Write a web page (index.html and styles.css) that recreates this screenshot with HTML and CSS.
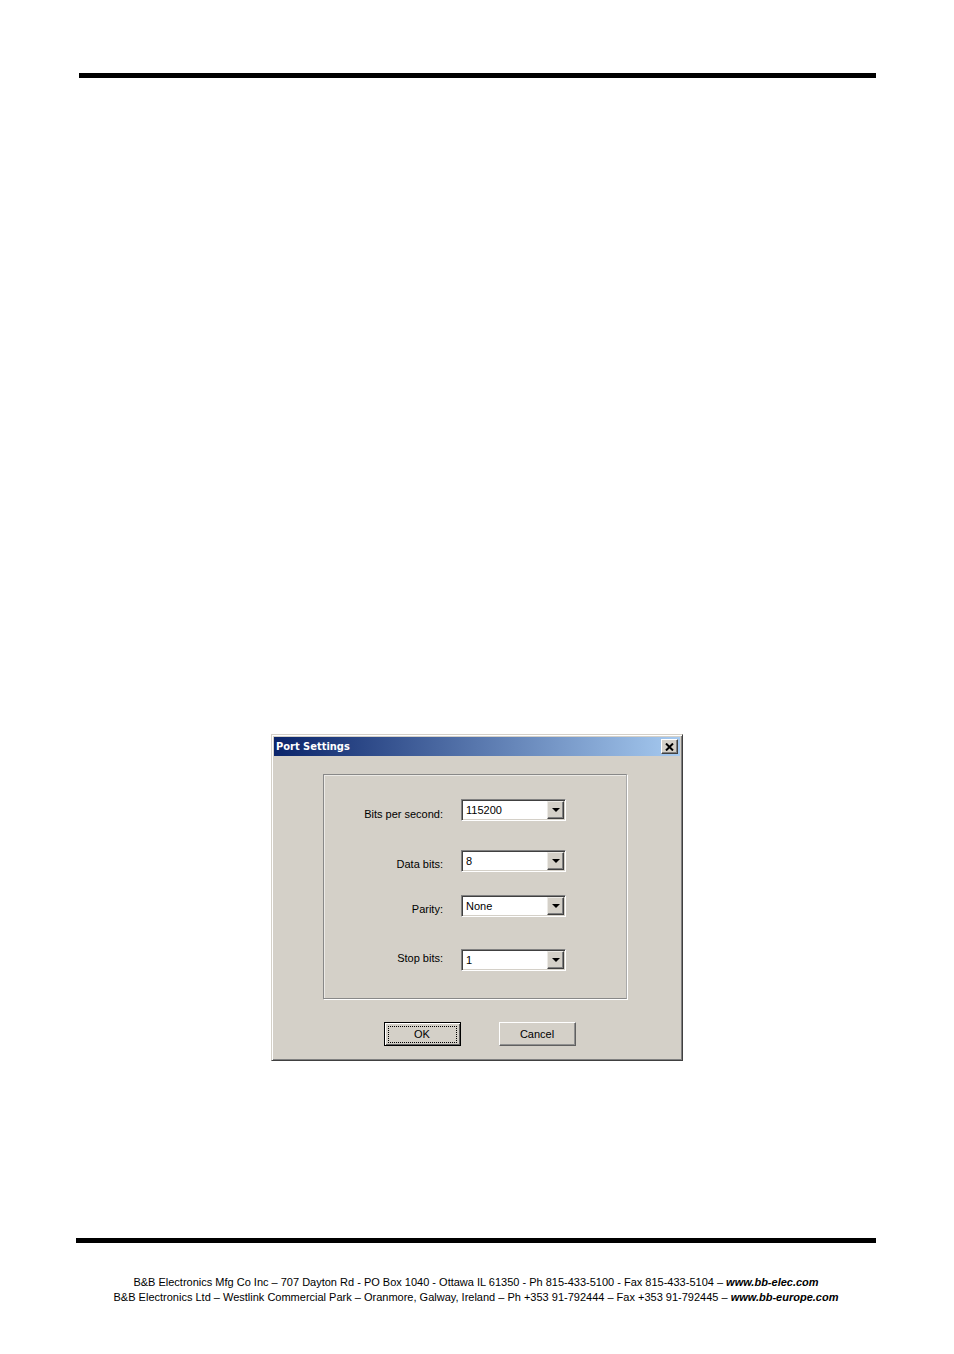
FILE: index.html
```html
<!DOCTYPE html>
<html lang="en">
<head>
    <meta charset="UTF-8">
    <meta name="viewport" content="width=device-width, initial-scale=1.0">
    <title>Port Settings</title>
    <link rel="stylesheet" href="styles.css">
</head>
<body>
    <header class="page-header"></header>

    <main class="page-content">
        <form class="dialog" role="dialog" aria-labelledby="dialog-title">
            <div class="title-bar">
                <h1 class="title" id="dialog-title">Port Settings</h1>
                <button class="close" type="button" aria-label="Close">
                    <svg width="9" height="8" viewBox="0 0 9 8" aria-hidden="true">
                        <path d="M1 0.5L8 7.5M8 0.5L1 7.5" stroke="#000" stroke-width="2"/>
                    </svg>
                </button>
            </div>

            <div class="settings">
                <div class="labels">
                    <label for="bits-per-second">Bits per second:</label>
                    <label for="data-bits">Data bits:</label>
                    <label for="parity">Parity:</label>
                    <label for="stop-bits">Stop bits:</label>
                </div>
                <div class="fields">
                    <div class="combo">
                        <select id="bits-per-second">
                            <option>115200</option>
                        </select>
                        <span class="arrow"><svg width="8" height="4" viewBox="0 0 8 4" aria-hidden="true"><path d="M0 0h8L4 4z"/></svg></span>
                    </div>
                    <div class="combo">
                        <select id="data-bits">
                            <option>8</option>
                        </select>
                        <span class="arrow"><svg width="8" height="4" viewBox="0 0 8 4" aria-hidden="true"><path d="M0 0h8L4 4z"/></svg></span>
                    </div>
                    <div class="combo">
                        <select id="parity">
                            <option>None</option>
                        </select>
                        <span class="arrow"><svg width="8" height="4" viewBox="0 0 8 4" aria-hidden="true"><path d="M0 0h8L4 4z"/></svg></span>
                    </div>
                    <div class="combo">
                        <select id="stop-bits">
                            <option>1</option>
                        </select>
                        <span class="arrow"><svg width="8" height="4" viewBox="0 0 8 4" aria-hidden="true"><path d="M0 0h8L4 4z"/></svg></span>
                    </div>
                </div>
            </div>

            <div class="actions">
                <button class="btn btn-default" type="button"><span>OK</span></button>
                <button class="btn" type="button"><span>Cancel</span></button>
            </div>
        </form>
    </main>

    <footer class="page-footer">
        <p>B&amp;B Electronics Mfg Co Inc – 707 Dayton Rd - PO Box 1040 - Ottawa IL 61350 - Ph 815-433-5100 - Fax 815-433-5104 – <a href="#">www.bb-elec.com</a></p>
        <p>B&amp;B Electronics Ltd – Westlink Commercial Park – Oranmore, Galway, Ireland – Ph +353 91-792444 – Fax +353 91-792445 – <a href="#">www.bb-europe.com</a></p>
    </footer>
</body>
</html>
```
FILE: styles.css
```css
* {
    box-sizing: border-box;
}
body {
    display: flex;
    flex-direction: column;
    min-height: 100vh;
    margin: 0;
    padding: 73px 78px 0 76px;
    background-color: #fff;
    color: #000;
    font-family: "Liberation Sans", Arial, sans-serif;
    font-size: 11px;
}
.page-header {
    margin-left: 3px;
    border-top: 5px solid #000;
}
.page-content {
    display: flex;
    flex: 1;
    justify-content: center;
    align-items: flex-start;
    padding: 656px 0 48px 2px;
}

/* Dialog window */
.dialog {
    width: 412px;
    padding: 1px;
    background-color: #d4d0c8;
    border: 1px solid;
    border-color: #d4d0c8 #404040 #404040 #d4d0c8;
    box-shadow: inset 1px 1px #fff, inset -1px -1px #808080;
}
.title-bar {
    display: flex;
    align-items: center;
    justify-content: space-between;
    height: 19px;
    margin: 1px;
    padding: 0 2px;
    background: linear-gradient(to right, #0a246a, #a6caf0);
}
.title {
    margin: 0;
    color: #fff;
    font: bold 11px/18px "DejaVu Sans Condensed", "DejaVu Sans", sans-serif;
}
.close {
    display: flex;
    align-items: center;
    justify-content: center;
    width: 17px;
    height: 15px;
    padding: 0;
    background-color: #d4d0c8;
    border: 1px solid;
    border-color: #fff #404040 #404040 #fff;
    box-shadow: inset -1px -1px #808080;
}
.settings {
    display: flex;
    justify-content: flex-end;
    gap: 18px;
    height: 225px;
    margin: 18px 54px 0 50px;
    padding: 24px 60px 0 20px;
    border: 1px solid #888;
    border-right-color: #aaa;
    box-shadow: inset 1px 1px #eceae6, 1px 1px #fff;
}
.labels {
    display: grid;
    grid-template-rows: 50px 45px 49px 22px;
    align-content: start;
    padding-top: 4px;
    text-align: right;
    line-height: 22px;
}
.fields {
    display: grid;
    grid-template-rows: 51px 45px 54px 22px;
    align-content: start;
    width: 105px;
}

/* Drop-down with its arrow button laid over the right edge */
.combo {
    display: grid;
    align-self: start;
    height: 22px;
}
.combo select {
    grid-area: 1 / 1;
    appearance: none;
    width: 100%;
    height: 22px;
    padding: 0 20px 0 4px;
    background-color: #fff;
    border: 1px solid;
    border-color: #808080 #fff #fff #808080;
    border-radius: 0;
    box-shadow: inset 1px 1px #404040, inset -1px -1px #d4d0c8;
    color: #000;
    font: inherit;
}
.arrow {
    grid-area: 1 / 1;
    display: flex;
    align-items: center;
    justify-content: center;
    justify-self: end;
    align-self: center;
    width: 17px;
    height: 18px;
    margin-right: 2px;
    background-color: #d4d0c8;
    border: 1px solid;
    border-color: #eceae6 #404040 #404040 #eceae6;
    box-shadow: inset -1px -1px #808080;
    pointer-events: none;
}

.actions {
    display: flex;
    justify-content: center;
    gap: 38px;
    padding: 23px 0 13px 5px;
}
.btn {
    width: 77px;
    height: 24px;
    padding: 2px;
    background-color: #d4d0c8;
    border: 1px solid;
    border-color: #fff #606060 #606060 #fff;
    box-shadow: inset -1px -1px #909090;
    color: #000;
    font: inherit;
    line-height: 15px;
}
.btn-default {
    border-color: #000;
    box-shadow: inset 1px 1px #fff, inset -1px -1px #606060;
}
.btn span {
    display: block;
    border: 1px solid transparent;
}
.btn-default span {
    margin: 0 1px;
    border: 1px dotted #000;
}

/* Company addresses */
.page-footer {
    padding: 32px 0 49px;
    border-top: 5px solid #000;
    text-align: center;
    line-height: 15px;
}
.page-footer p {
    margin: 0;
}
.page-footer a {
    color: inherit;
    font-weight: bold;
    font-style: italic;
    text-decoration: none;
}
```
